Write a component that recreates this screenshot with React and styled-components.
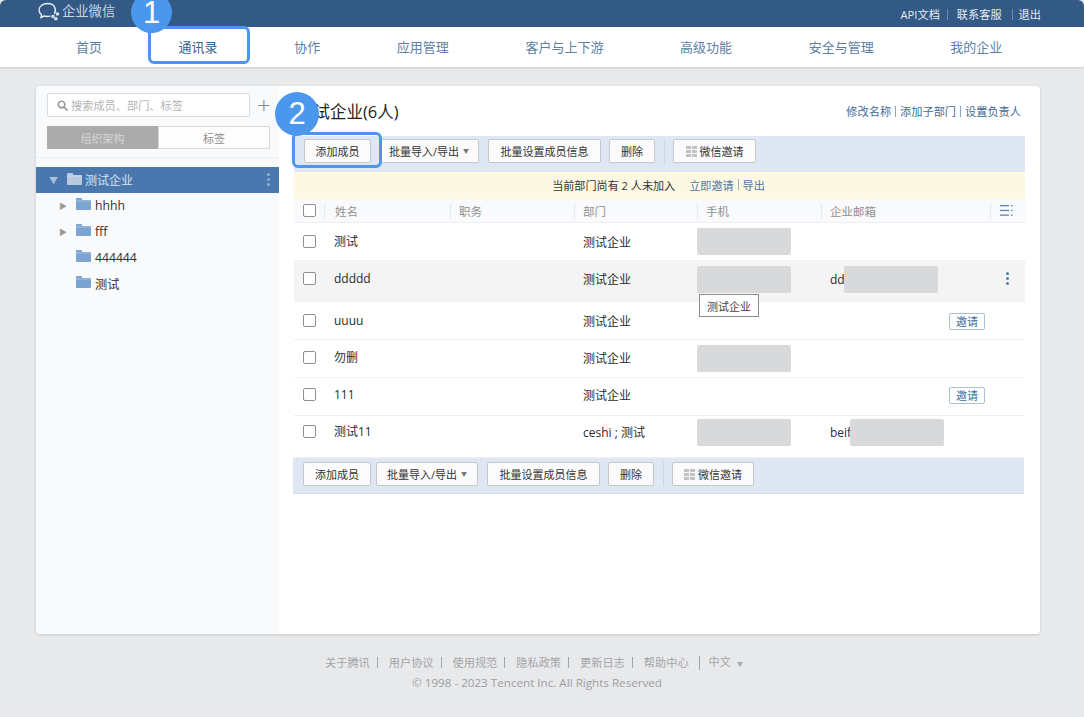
import React from 'react';
import styled, { createGlobalStyle } from 'styled-components';

const NAV_ITEMS = ['首页', '通讯录', '协作', '应用管理', '客户与上下游', '高级功能', '安全与管理', '我的企业'];

const MEMBERS = [
  { name: '测试', dept: '测试企业', height: 38, pad: 11, maskTop: -6, phone: true },
  { name: 'ddddd', dept: '测试企业', height: 41, pad: 10, maskTop: -5, phone: true, email: 'dd', hover: true },
  { name: 'uuuu', dept: '测试企业', height: 38, pad: 11, maskTop: -6, invite: true },
  { name: '勿删', dept: '测试企业', height: 38, pad: 10, maskTop: -5, phone: true },
  { name: '111', dept: '测试企业', height: 38, pad: 9, maskTop: -5, invite: true },
  { name: '测试11', dept: 'ceshi ; 测试', height: 42, pad: 8, maskTop: -5, phone: true, email: 'beif' },
];

const Logo = () => (
  <svg width="24" height="20" viewBox="0 0 24 20" fill="none" stroke="#e6ecf3" strokeWidth="1.4">
    <path d="M16.500 12.500c2-3.500.8-10-7-10C4.500 2.500 1 5.500 1 9c0 2 1 3.500 2.500 4.800L3 16.500l3-1.500c2 .6 4 .6 6 .1" strokeLinecap="round" />
    <circle cx="15" cy="15.500" r="1.100" />
    <circle cx="19.500" cy="13" r="1.100" />
    <circle cx="17.800" cy="17.800" r="1.100" />
  </svg>
);

const Folder = ({ color }) => (
  <FolderIcon width="15" height="12" viewBox="0 0 15 12">
    <path d="M1 0h4.500l1 2H14a1 1 0 0 1 1 1v8a1 1 0 0 1-1 1H1a1 1 0 0 1-1-1V1a1 1 0 0 1 1-1z" fill={color} />
    <path d="M0 3h15" stroke="#fff" strokeOpacity=".35" />
  </FolderIcon>
);

const SearchIcon = () => (
  <svg width="11" height="11" viewBox="0 0 12 12" fill="none" stroke="#9a9a9a" strokeWidth="1.800">
    <circle cx="5" cy="5" r="3.600" />
    <path d="M7.800 7.800 11 11" strokeLinecap="round" />
  </svg>
);

const QrIcon = () => (
  <svg width="11" height="11" viewBox="0 0 11 11" fill="#c2c2c2">
    <rect x="0" y="0" width="5" height="3" />
    <rect x="6" y="0" width="5" height="3" />
    <rect x="0" y="4" width="5" height="3" />
    <rect x="6" y="4" width="5" height="3" />
    <rect x="0" y="8" width="5" height="3" />
    <rect x="6" y="8" width="5" height="3" />
  </svg>
);

const ColumnsIcon = () => (
  <svg width="13" height="11" viewBox="0 0 13 11" fill="#5d86b2">
    <rect x="0" y="0" width="9" height="1.300" />
    <rect x="0" y="4.800" width="9" height="1.300" />
    <rect x="0" y="9.500" width="9" height="1.300" />
    <rect x="11" y="0" width="1.600" height="1.300" />
    <rect x="11" y="4.800" width="1.600" height="1.300" />
    <rect x="11" y="9.500" width="1.600" height="1.300" />
  </svg>
);

const Toolbar = ({ bottom }) => (
  <ToolbarBar $bottom={bottom}>
    <Button $w={bottom ? 68 : 67}>添加成员</Button>
    <Button $w={bottom ? 102 : 100} $ml={bottom ? 5 : 8}>批量导入/导出<Caret>▼</Caret></Button>
    <Button $w={113} $ml={9}>批量设置成员信息</Button>
    <Button $w={46} $ml={8}>删除</Button>
    <ToolDivider />
    <Button $w={bottom ? 82 : 83}><QrIcon />微信邀请</Button>
  </ToolbarBar>
);

export default function App() {
  return (
    <>
      <GlobalStyle />
      <Page>
        <TopBar>
          <Brand><Logo />企业微信</Brand>
          <TopLinks>
            <TopLink>API文档</TopLink>
            <TopLink>联系客服</TopLink>
            <TopLink>退出</TopLink>
          </TopLinks>
        </TopBar>
        <Nav>
          {NAV_ITEMS.map((item) => (
            <NavItem key={item} $active={item === '通讯录'}>{item}</NavItem>
          ))}
        </Nav>

        <Card>
          <Sidebar>
            <SearchRow>
              <SearchBox><SearchIcon />搜索成员、部门、标签</SearchBox>
              <PlusButton>+</PlusButton>
            </SearchRow>
            <Tabs>
              <Tab $active>组织架构</Tab>
              <Tab>标签</Tab>
            </Tabs>
            <Tree>
              <RootNode>
                <RootCaret>▼</RootCaret>
                <Folder color="#b6c9df" />
                测试企业
                <MoreDots $color="#8eadcf" $right={9} />
              </RootNode>
              <TreeNode><TreeCaret>▶</TreeCaret><Folder color="#7ba4d0" />hhhh</TreeNode>
              <TreeNode><TreeCaret>▶</TreeCaret><Folder color="#7ba4d0" />fff</TreeNode>
              <TreeNode><TreeCaret /><Folder color="#7ba4d0" />444444</TreeNode>
              <TreeNode><TreeCaret /><Folder color="#7ba4d0" />测试</TreeNode>
            </Tree>
          </Sidebar>

          <Main>
            <TitleRow>
              <Title>测试企业(6人)</Title>
              <TitleLinks>
                <TitleLink>修改名称</TitleLink>
                <TitleLink>添加子部门</TitleLink>
                <TitleLink>设置负责人</TitleLink>
              </TitleLinks>
            </TitleRow>
            <Toolbar />
            <Notice>
              当前部门尚有 2 人未加入
              <NoticeLinks><b>立即邀请</b><i />导出</NoticeLinks>
            </Notice>
            <HeadRow>
              <Checkbox />
              <HeadCell>姓名</HeadCell>
              <HeadCell>职务</HeadCell>
              <HeadCell>部门</HeadCell>
              <HeadCell>手机</HeadCell>
              <HeadCell>企业邮箱</HeadCell>
              <HeadCell $icon><ColumnsIcon /></HeadCell>
            </HeadRow>
            {MEMBERS.map((m) => (
              <MemberRow key={m.name} $hover={m.hover} $h={m.height} $pad={m.pad}>
                <Checkbox />
                <Cell>{m.name}</Cell>
                <Cell />
                <Cell $dept>{m.dept}</Cell>
                <Cell>{m.phone && <Mask $left={0} $top={m.maskTop} />}</Cell>
                <Cell $email>
                  {m.email}
                  {m.email && <Mask $left={m.email === 'dd' ? 23 : 29} $top={m.maskTop - 1} />}
                </Cell>
                <Cell>
                  {m.invite && <InviteButton>邀请</InviteButton>}
                  {m.hover && <MoreDots $color="#4f7fb2" $right={16} />}
                </Cell>
                {m.hover && <Tip>测试企业</Tip>}
              </MemberRow>
            ))}
            <Toolbar bottom />
          </Main>

          <Ring $x={256} $y={46} $w={90} $h={36} />
          <Badge $x={239} $y={6} $size={44}>2</Badge>
        </Card>

        <PageRing />
        <PageBadge>1</PageBadge>

        <Footer>
          <FooterLinks>
            <span>关于腾讯</span>
            <span>用户协议</span>
            <span>使用规范</span>
            <span>隐私政策</span>
            <span>更新日志</span>
            <span>帮助中心</span>
            <span>中文 <small>▼</small></span>
          </FooterLinks>
          <Copyright>© 1998 - 2023 Tencent Inc. All Rights Reserved</Copyright>
        </Footer>
      </Page>
    </>
  );
}

const GlobalStyle = createGlobalStyle`
  html, body {
    margin: 0;
    padding: 0;
    background: #e8e9eb;
    font-family: "Open Sans", "Noto Sans CJK SC", sans-serif;
  }
  * { box-sizing: border-box; }
`;

const Page = styled.div`
  position: relative;
  width: 1084px;
  height: 717px;
  overflow: hidden;
  background: #e8e9eb;
`;

const TopBar = styled.div`
  height: 27px;
  display: flex;
  align-items: center;
  justify-content: space-between;
  padding: 0 43px 0 38px;
  background: #335985;
  border-radius: 6px 6px 0 0;
`;

const Brand = styled.div`
  display: flex;
  align-items: center;
  gap: 0;
  margin-bottom: 6px;
  color: #c9d5e3;
  font-size: 13.300px;
`;

const TopLinks = styled.div`
  display: flex;
  align-items: center;
  margin-top: 2px;
`;

const TopLink = styled.span`
  color: #e6ecf3;
  font-size: 11.200px;
  line-height: 11px;
  padding: 0 10px 0 9px;
  border-left: 1px solid #6f8dae;

  &:first-child { border-left: 0; padding-right: 7px; }
  &:last-child { padding-right: 0; padding-left: 6px; }
`;

const Nav = styled.nav`
  height: 40px;
  display: flex;
  align-items: center;
  gap: 76.600px;
  padding: 0 0 2px 76px;
  background: #fff;
  box-shadow: 0 1px 2px rgba(0, 0, 0, 0.12);
`;

const NavItem = styled.a`
  font-size: 13px;
  color: ${(p) => (p.$active ? '#37618e' : '#5d7fa5')};
`;

const Card = styled.div`
  position: relative;
  display: flex;
  width: 1004px;
  height: 548px;
  margin: 19px 0 0 36px;
  background: #fff;
  border-radius: 4px;
  box-shadow: 0 1px 3px rgba(0, 0, 0, 0.15);
`;

const Sidebar = styled.aside`
  width: 243px;
  flex: none;
  padding-top: 7px;
  background: #f9fafc;
  border-radius: 4px 0 0 4px;
`;

const SearchRow = styled.div`
  display: flex;
  align-items: center;
  padding-left: 11px;
`;

const SearchBox = styled.div`
  width: 203px;
  height: 24px;
  display: flex;
  align-items: center;
  gap: 3px;
  padding-left: 9px;
  font-size: 11.200px;
  color: #b3b3b3;
  background: #fff;
  border: 1px solid #d9dce0;
  border-radius: 2px;
`;

const PlusButton = styled.span`
  margin-left: 7px;
  font-size: 24px;
  font-weight: 300;
  line-height: 20px;
  color: #8b8b8b;
`;

const Tabs = styled.div`
  display: flex;
  width: 223px;
  height: 23px;
  margin: 9px 0 0 11px;
`;

const Tab = styled.div`
  flex: ${(p) => (p.$active ? '0 0 111px' : '1')};
  display: flex;
  align-items: center;
  justify-content: center;
  font-size: 11px;
  color: ${(p) => (p.$active ? '#d5d5d5' : '#8f8f8f')};
  background: ${(p) => (p.$active ? '#ababab' : '#fdfdfd')};
  border: 1px solid ${(p) => (p.$active ? '#ababab' : '#d6d8da')};
`;

const Tree = styled.div`
  margin-top: 8px;
  padding-top: 9px;
  border-top: 1px solid #eef0f3;
`;

const FolderIcon = styled.svg`
  flex: none;
`;

const RootNode = styled.div`
  position: relative;
  height: 26px;
  display: flex;
  align-items: center;
  padding-left: 13px;
  font-size: 12px;
  color: #d8e4f1;
  background: #4a78ae;

  ${FolderIcon} { margin: 0 3px 2px 9px; }
`;

const RootCaret = styled.span`
  width: 9px;
  font-size: 9px;
  color: #a7bfd9;
`;

const TreeNode = styled.div`
  height: 26px;
  display: flex;
  align-items: center;
  padding: 0 0 1px 23px;
  font-size: 12.200px;
  color: #2f2f2f;

  ${FolderIcon} { margin: 0 4px 3px 8px; }
`;

const TreeCaret = styled.span`
  width: 9px;
  font-size: 8px;
  color: #999;
`;

const MoreDots = styled.span`
  position: absolute;
  top: 50%;
  right: ${(p) => p.$right}px;
  width: 3px;
  height: 3px;
  margin-top: -2px;
  border-radius: 50%;
  background: ${(p) => p.$color};
  box-shadow: 0 -5px 0 ${(p) => p.$color}, 0 5px 0 ${(p) => p.$color};
`;

const Main = styled.main`
  flex: 1;
  padding: 0 15px 0 15px;
`;

const TitleRow = styled.div`
  height: 50px;
  display: flex;
  align-items: center;
  justify-content: space-between;
  padding: 0 4px 0 3px;
`;

const Title = styled.h1`
  margin: 0;
  font-size: 16.500px;
  font-weight: 400;
  color: #222;
`;

const TitleLinks = styled.div`
  display: flex;
  align-items: center;
`;

const TitleLink = styled.span`
  font-size: 11.200px;
  line-height: 11px;
  color: #3f6a97;
  padding: 0 4px;
  border-left: 1px solid #8aa6c4;

  &:first-child { border-left: 0; }
  &:last-child { padding-right: 0; }
`;

const ToolbarBar = styled.div`
  height: 36px;
  display: flex;
  align-items: flex-start;
  padding: ${(p) => (p.$bottom ? 4 : 3)}px 0 0 10px;
  background: #dee7f3;
  margin-left: ${(p) => (p.$bottom ? -1 : 0)}px;
  margin-right: ${(p) => (p.$bottom ? 1 : 0)}px;
  border-bottom: ${(p) => (p.$bottom ? '1px solid #d3dce8' : '0')};
`;

const Button = styled.button`
  width: ${(p) => p.$w}px;
  margin-left: ${(p) => p.$ml || 0}px;
  height: 24px;
  padding: 0;
  display: flex;
  align-items: center;
  justify-content: center;
  gap: 3px;
  font-family: inherit;
  font-size: 11px;
  color: #333;
  background: #fbfbfb;
  border: 1px solid #c4c8cd;
  border-radius: 2px;
`;

const Caret = styled.span`
  font-size: 6px;
  color: #777;
  margin: 0 0 2px 1px;
`;

const ToolDivider = styled.span`
  width: 1px;
  height: 24px;
  margin: 0 8px 0 9px;
  background: #cdd6e1;
`;

const Notice = styled.div`
  height: 27px;
  display: flex;
  align-items: center;
  justify-content: center;
  padding: 0 2px 2px 0;
  font-size: 11.100px;
  color: #333;
  background: #fdf8e2;
`;

const NoticeLinks = styled.span`
  display: inline-flex;
  align-items: center;
  margin-left: 14px;
  color: #4d779f;

  b { font-weight: 400; }
  i { width: 1px; height: 11px; margin: 0 4px; background: #9db3c9; }
`;

const rowGrid = `
  display: grid;
  grid-template-columns: 30px 126px 124px 123px 124px 169px 35px;
  align-items: center;
`;

const HeadRow = styled.div`
  ${rowGrid}
  height: 24px;
  background: #f9fafc;
  border-bottom: 1px solid #eceef1;
`;

const Checkbox = styled.span`
  justify-self: start;
  width: 13px;
  height: 13px;
  margin-left: 9px;
  background: #fff;
  border: 1px solid #8f8f8f;
  border-radius: 2px;
`;

const HeadCell = styled.div`
  height: 16px;
  display: flex;
  align-items: center;
  padding-left: ${(p) => (p.$icon ? 9 : 8)}px;
  font-size: 11.500px;
  color: #8f8f8f;
  border-left: 1px solid #e6e8eb;

  &:nth-child(2) { padding-left: 10px; }
`;

const MemberRow = styled.div`
  ${rowGrid}
  position: relative;
  height: ${(p) => p.$h}px;
  padding-top: ${(p) => p.$pad}px;
  background: ${(p) => (p.$hover ? '#f4f4f4' : '#fff')};
  border-bottom: 1px solid #eff0f2;
  align-items: start;

  ${Checkbox} { margin-top: 1px; }
`;

const Cell = styled.div`
  position: relative;
  min-height: 16px;
  font-size: 12px;
  line-height: 16px;
  color: #2b2b2b;
  padding-left: ${(p) => (p.$email ? 9 : p.$dept ? 9 : 10)}px;
  margin-top: ${(p) => (p.$dept || p.$email ? 1 : 0)}px;
`;

const Mask = styled.span`
  position: absolute;
  top: ${(p) => p.$top}px;
  left: ${(p) => p.$left}px;
  width: 94px;
  height: 27px;
  background: #d8d9db;
  border-radius: 2px;
`;

const InviteButton = styled.span`
  position: absolute;
  top: 0;
  left: -41px;
  width: 36px;
  height: 17px;
  display: flex;
  align-items: center;
  justify-content: center;
  font-size: 11px;
  color: #3c6a9a;
  background: #fff;
  border: 1px solid #a9c1da;
  border-radius: 2px;
`;

const Tip = styled.div`
  position: absolute;
  top: 33px;
  left: 405px;
  z-index: 2;
  width: 60px;
  height: 23px;
  display: flex;
  align-items: center;
  justify-content: center;
  font-size: 11px;
  color: #444;
  background: #fff;
  border: 1px solid #8c8c8c;
`;

const Ring = styled.div`
  position: absolute;
  left: ${(p) => p.$x}px;
  top: ${(p) => p.$y}px;
  width: ${(p) => p.$w}px;
  height: ${(p) => p.$h}px;
  border: 3px solid #4c97ee;
  border-radius: 6px;
  z-index: 5;
`;

const Badge = styled.div`
  position: absolute;
  left: ${(p) => p.$x}px;
  top: ${(p) => p.$y}px;
  width: ${(p) => p.$size}px;
  height: ${(p) => p.$size}px;
  display: flex;
  align-items: center;
  justify-content: center;
  font-family: "Liberation Sans", sans-serif;
  font-size: 31px;
  color: #fff;
  background: #4c97ee;
  border-radius: 50%;
  z-index: 6;
`;

const PageRing = styled(Ring).attrs({ $x: 148, $y: 26, $w: 102, $h: 38 })``;

const PageBadge = styled(Badge).attrs({ $x: 131, $y: -8, $size: 41 })``;

const Footer = styled.footer`
  margin-top: 20px;
  text-align: center;
  font-size: 11.200px;
  color: #a3a5a8;
`;

const FooterLinks = styled.div`
  display: flex;
  justify-content: flex-start;
  padding-left: 325px;
  height: 17px;
  align-items: center;

  span { padding: 0 7px 0 11px; line-height: 11px; border-left: 1px solid #a3a5a8; }
  span:first-child { border-left: 0; padding-left: 0; }
  span:nth-child(6) { padding-right: 10px; }
  span:last-child { padding: 0 0 0 9px; }
  small { font-size: 6px; margin-left: 3px; }
`;

const Copyright = styled.div`
  margin-top: 4px;
  padding-right: 10px;
  font-size: 11.650px;
  color: #9b9da0;
`;
